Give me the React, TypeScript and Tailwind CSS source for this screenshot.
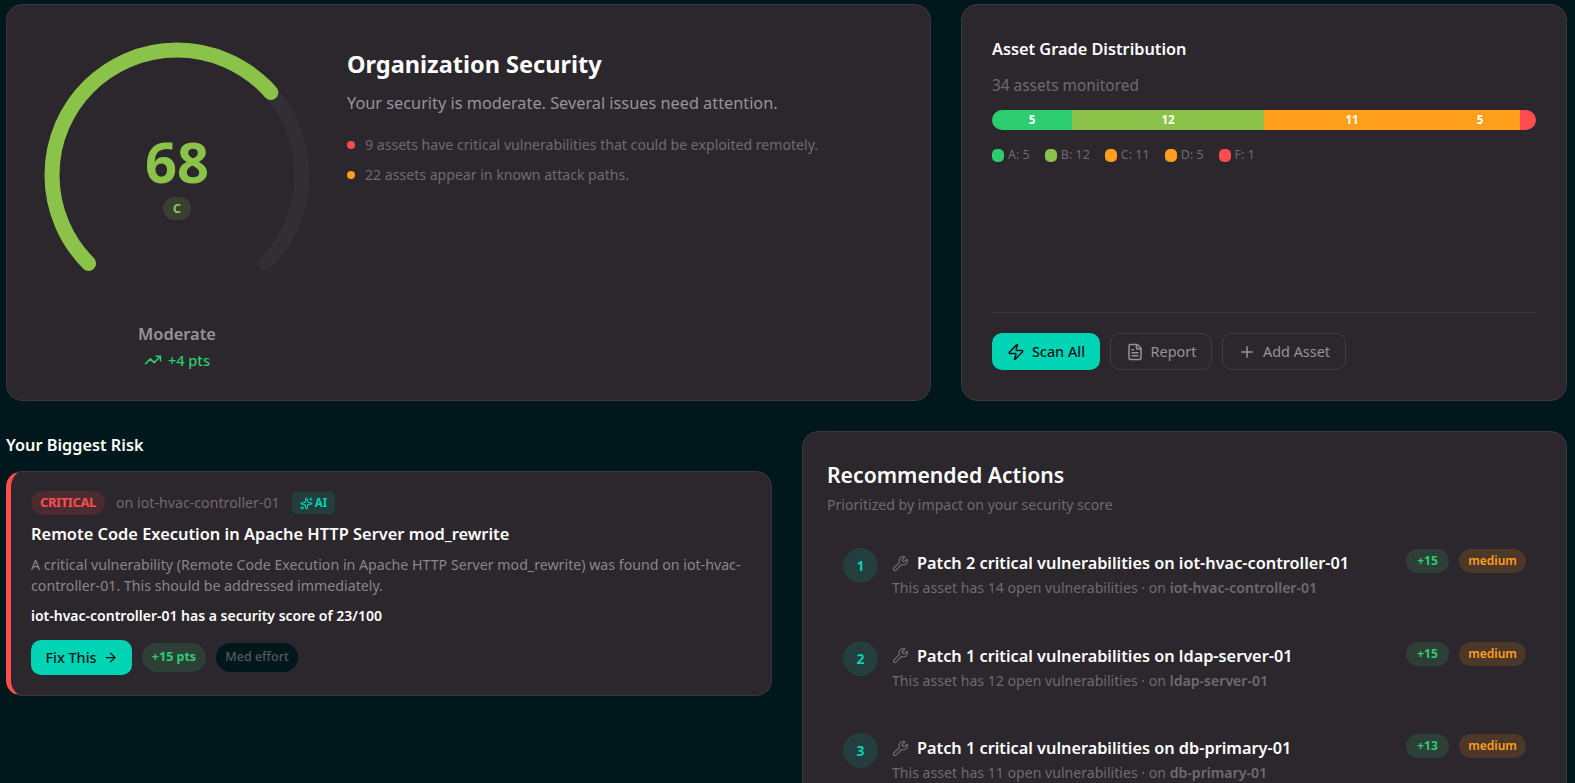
import { ArrowRight, FileText, Plus, Sparkles, TrendingUp, Wrench, Zap } from "lucide-react";

const segments = [
  { label: "A", count: 5, bar: "bg-[#2ecc71]", show: true },
  { label: "B", count: 12, bar: "bg-[#8bc34a]", show: true },
  { label: "C", count: 11, bar: "bg-[#ff9f1c]", show: true },
  { label: "D", count: 5, bar: "bg-[#ff9f1c]", show: true },
  { label: "F", count: 1, bar: "bg-[#ff4d4f]", show: false },
];

const actions = [
  { n: 1, title: "Patch 2 critical vulnerabilities on iot-hvac-controller-01", open: 14, asset: "iot-hvac-controller-01", pts: 15 },
  { n: 2, title: "Patch 1 critical vulnerabilities on ldap-server-01", open: 12, asset: "ldap-server-01", pts: 15 },
  { n: 3, title: "Patch 1 critical vulnerabilities on db-primary-01", open: 11, asset: "db-primary-01", pts: 13 },
];

function Gauge() {
  const r = 125;
  const c = 2 * Math.PI * r;
  const arc = c * 0.75;
  return (
    <div className="relative h-[280px] w-[280px] shrink-0">
      <svg width="280" height="280" viewBox="0 0 280 280" className="rotate-[135deg]">
        <circle cx="140" cy="140" r={r} fill="none" stroke="#322e33" strokeWidth="15" strokeLinecap="round" strokeDasharray={`${arc} ${c}`} />
        <circle cx="140" cy="140" r={r} fill="none" stroke="#8bc34a" strokeWidth="15" strokeLinecap="round" strokeDasharray={`${arc * 0.68} ${c}`} />
      </svg>
      <div className="absolute inset-0 flex flex-col items-center justify-center">
        <span className="text-[56px] font-bold leading-[62px] text-[#8bc34a]">68</span>
        <span className="mt-[5px] flex h-[23px] w-[28px] items-center justify-center rounded-full bg-[#3b3f33] text-[13px] font-bold text-[#8bc34a]">C</span>
      </div>
    </div>
  );
}

export default function App() {
  return (
    <div className="h-screen overflow-hidden bg-[#00171b] pl-[6px] pr-[8px] pt-[4px] font-['Noto_Sans',sans-serif]">
      <div className="grid grid-cols-[925px_606px] gap-[30px]">
        <section className="flex h-[397px] gap-[30px] rounded-[16px] border border-[#3b373d] bg-[#2b272c] pl-[30px] pt-[30px]">
          <div className="flex flex-col items-center">
            <Gauge />
            <div className="mt-[7px] text-[16.4px] font-semibold leading-[24px] text-[#98939a]">Moderate</div>
            <div className="mt-[4px] flex items-center gap-[6px] text-[14.5px] font-medium leading-[20px] text-[#2ecc71]">
              <TrendingUp size={18} />
              +4 pts
            </div>
          </div>
          <div className="pt-[11px]">
            <h1 className="text-[23.5px] font-bold leading-[36px] text-white">Organization Security</h1>
            <p className="mt-[9px] text-[16.3px] leading-[24px] text-[#98939a]">Your security is moderate. Several issues need attention.</p>
            <ul className="mt-[19px] flex flex-col gap-[8px] text-[14.1px] leading-[22px] text-[#6f6a70]">
              <li className="flex items-center">
                <span className="mr-[10px] h-[8px] w-[8px] rounded-full bg-[#ff4d4f]" />
                9 assets have critical vulnerabilities that could be exploited remotely.
              </li>
              <li className="flex items-center">
                <span className="mr-[10px] h-[8px] w-[8px] rounded-full bg-[#ff9f1c]" />
                22 assets appear in known attack paths.
              </li>
            </ul>
          </div>
        </section>

        <section className="flex h-[397px] flex-col rounded-[16px] border border-[#3b373d] bg-[#2b272c] px-[30px] pt-[32px]">
          <h2 className="text-[16.3px] font-semibold leading-[24px] text-white">Asset Grade Distribution</h2>
          <div className="mt-[15px] text-[15.4px] leading-[20px] text-[#6f6a70]">34 assets monitored</div>
          <div className="mt-[14px] flex h-[20px] overflow-hidden rounded-full">
            {segments.map((s) => (
              <div key={s.label} style={{ flexGrow: s.count, flexBasis: 0 }} className={`flex items-center justify-center text-[11.5px] font-bold text-white ${s.bar}`}>
                {s.show ? s.count : null}
              </div>
            ))}
          </div>
          <div className="mt-[15px] flex gap-[15px] text-[12.5px] leading-[20px] text-[#6f6a70]">
            {segments.map((s) => (
              <div key={s.label} className="flex items-center gap-[4px]">
                <span className={`h-[13px] w-[12px] rounded-[5px] ${s.bar}`} />
                {s.label}: {s.count}
              </div>
            ))}
          </div>
          <div className="mt-auto border-t border-[#3b373d] pb-[30px] pt-[20px]">
            <div className="flex gap-[10px]">
              <button className="flex h-[37px] w-[108px] items-center justify-center gap-[7px] rounded-[10px] bg-[#00d4b4] text-[14.4px] font-medium text-[#00171b]">
                <Zap size={18} />
                Scan All
              </button>
              <button className="flex h-[37px] w-[102px] items-center justify-center gap-[7px] rounded-[10px] border border-[#3f3b41] text-[14.4px] text-[#98939a]">
                <FileText size={18} />
                Report
              </button>
              <button className="flex h-[37px] w-[124px] items-center justify-center gap-[7px] rounded-[10px] border border-[#3f3b41] text-[14.4px] text-[#98939a]">
                <Plus size={18} />
                Add Asset
              </button>
            </div>
          </div>
        </section>
      </div>

      <div className="mt-[30px] grid grid-cols-[766px_1fr] gap-[30px]">
        <div>
          <h2 className="mt-[2px] text-[16.3px] font-semibold leading-[24px] text-white">Your Biggest Risk</h2>
          <div className="mt-[14px] h-[225px] rounded-[16px] border border-l-[5px] border-[#3b373d] border-l-[#ff4d4f] bg-[#2b272c] pl-[20px] pr-[24px] pt-[19px]">
            <div className="flex h-[24px] items-center">
              <span className="flex h-[24px] w-[74px] items-center justify-center rounded-full bg-[#4a2b30] text-[13px] font-bold tracking-[-0.03em] text-[#ff4d4f]">CRITICAL</span>
              <span className="ml-[11px] text-[14.2px] text-[#6f6a70]">on iot-hvac-controller-01</span>
              <span className="ml-[12px] flex h-[22px] items-center gap-[2px] rounded-[5px] bg-[#243d3e] px-[8px] text-[11.5px] font-bold text-[#00d4b4]">
                <Sparkles size={13} />
                AI
              </span>
            </div>
            <h3 className="mt-[5px] text-[16.4px] font-semibold leading-[28px] text-white">Remote Code Execution in Apache HTTP Server mod_rewrite</h3>
            <p className="mt-[6px] text-[14.2px] leading-[21px] text-[#8a858b]">
              A critical vulnerability (Remote Code Execution in Apache HTTP Server mod_rewrite) was found on iot-hvac-controller-01. This should be addressed immediately.
            </p>
            <p className="mt-[10px] text-[14px] font-semibold leading-[20px] text-white">iot-hvac-controller-01 has a security score of 23/100</p>
            <div className="mt-[14px] flex items-center gap-[10px]">
              <button className="flex h-[35px] w-[101px] items-center justify-center gap-[6px] rounded-[10px] bg-[#00d4b4] text-[14.4px] font-medium text-[#00171b]">
                Fix This
                <ArrowRight size={15} />
              </button>
              <span className="flex h-[29px] w-[64px] items-center justify-center rounded-full bg-[#2d3f37] text-[12.5px] font-bold text-[#2ecc71]">+15 pts</span>
              <span className="flex h-[29px] w-[82px] items-center justify-center rounded-full bg-[#00171b] text-[12.5px] font-medium text-[#55595b]">Med effort</span>
            </div>
          </div>
        </div>

        <section className="h-[500px] rounded-[16px] border border-[#3b373d] bg-[#2b272c] px-[24px] pt-[27px]">
          <h2 className="text-[21.2px] font-semibold leading-[32px] text-white">Recommended Actions</h2>
          <div className="mt-[3px] text-[14.1px] leading-[22px] text-[#6f6a70]">Prioritized by impact on your security score</div>
          <div className="mt-[32px] flex flex-col gap-[40.5px]">
            {actions.map((a) => (
              <div key={a.n} className="flex h-[52px] pl-[16px] pr-[16px]">
                <span className="flex h-[35px] w-[35px] shrink-0 items-center justify-center rounded-full bg-[#243d3e] text-[14px] font-bold text-[#00d4b4]">{a.n}</span>
                <div className="ml-[14px] min-w-0 flex-1 pt-[1px]">
                  <div className="flex items-center gap-[8px] text-[16.3px] font-semibold leading-[28px] text-white">
                    <Wrench size={17} strokeWidth={1.75} className="text-[#6f6a70]" />
                    {a.title}
                  </div>
                  <div className="text-[14.1px] leading-[22px] text-[#6f6a70]">
                    This asset has {a.open} open vulnerabilities · on <b className="font-semibold">{a.asset}</b>
                  </div>
                </div>
                <div className="mt-[1px] flex h-[24px] gap-[10px] text-[12px]">
                  <span className="flex h-[24px] w-[43px] items-center justify-center rounded-full bg-[#2d3f37] font-bold text-[#2ecc71]">+{a.pts}</span>
                  <span className="flex h-[24px] w-[67px] items-center justify-center rounded-full bg-[#4b3829] font-semibold text-[#ff9f1c]">medium</span>
                </div>
              </div>
            ))}
          </div>
        </section>
      </div>
    </div>
  );
}
